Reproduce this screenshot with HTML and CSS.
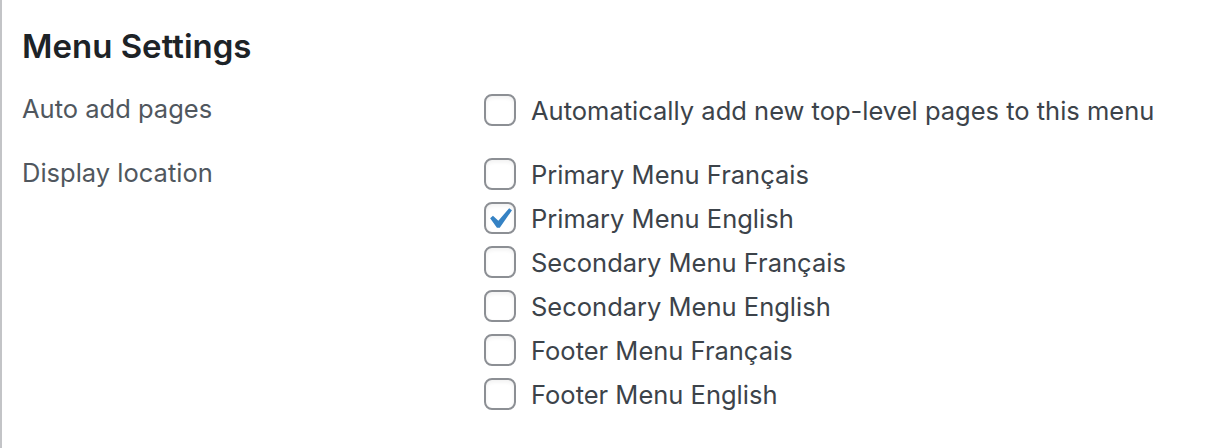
FILE: index.html
```html
<!DOCTYPE html>
<html lang="en">
<head>
<meta charset="utf-8">
<title>Menu Settings</title>
<link rel="stylesheet" href="styles.css">
</head>
<body>
<div class="menu-settings">
  <h3 class="heading">Menu Settings</h3>
  <div class="setting">
    <div class="setting-label">Auto add pages</div>
    <div class="setting-options">
      <label class="option"><span class="checkbox"></span><span class="option-text">Automatically add new top-level pages to this menu</span></label>
    </div>
  </div>
  <div class="setting setting-locations">
    <div class="setting-label">Display location</div>
    <div class="setting-options">
      <label class="option"><span class="checkbox"></span><span class="option-text">Primary Menu Français</span></label>
      <label class="option"><span class="checkbox is-checked"><svg class="check" viewBox="0 0 20 20" aria-hidden="true"><path d="M14.83 4.89l1.34.94-5.81 8.38H9.02L5.78 9.67l1.34-1.25 2.57 2.4z"/></svg></span><span class="option-text">Primary Menu English</span></label>
      <label class="option"><span class="checkbox"></span><span class="option-text">Secondary Menu Français</span></label>
      <label class="option"><span class="checkbox"></span><span class="option-text">Secondary Menu English</span></label>
      <label class="option"><span class="checkbox"></span><span class="option-text">Footer Menu Français</span></label>
      <label class="option"><span class="checkbox"></span><span class="option-text">Footer Menu English</span></label>
    </div>
  </div>
</div>
</body>
</html>
```

FILE: styles.css
```css
html, body {
  margin: 0;
  padding: 0;
  background: #ffffff;
}

body {
  font-family: Inter, "Liberation Sans", Arial, sans-serif;
  width: 1210px;
  height: 448px;
  overflow: hidden;
}

.menu-settings {
  box-sizing: border-box;
  height: 448px;
  border-left: 2px solid #c3c4c7;
  padding: 26px 0 0 20px;
}

.heading {
  margin: 0 0 22px;
  font-size: 33px;
  line-height: 40px;
  font-weight: 600;
  color: #1d2327;
}

.setting {
  display: grid;
  grid-template-columns: 462px 1fr;
}

.setting-locations {
  margin-top: 20px;
}

.setting-label {
  font-size: 25.5px;
  line-height: 44px;
  color: #50575e;
  position: relative;
  top: -1px;
}

.setting-options {
  display: flex;
  flex-direction: column;
}

.option {
  display: flex;
  align-items: center;
  height: 44px;
  font-size: 25.5px;
  line-height: 44px;
  color: #3c434a;
}

.option-text {
  padding-top: 2px;
}

.checkbox {
  position: relative;
  box-sizing: border-box;
  width: 32px;
  height: 32px;
  flex: none;
  border: 2px solid #8c8f94;
  border-radius: 8px;
  background: #fff;
  margin-right: 15px;
  box-shadow: inset 0 2px 4px rgba(0, 0, 0, 0.06);
}

.check {
  position: absolute;
  top: -6px;
  left: -8px;
  width: 42px;
  height: 42px;
  fill: #3582c4;
}
```
